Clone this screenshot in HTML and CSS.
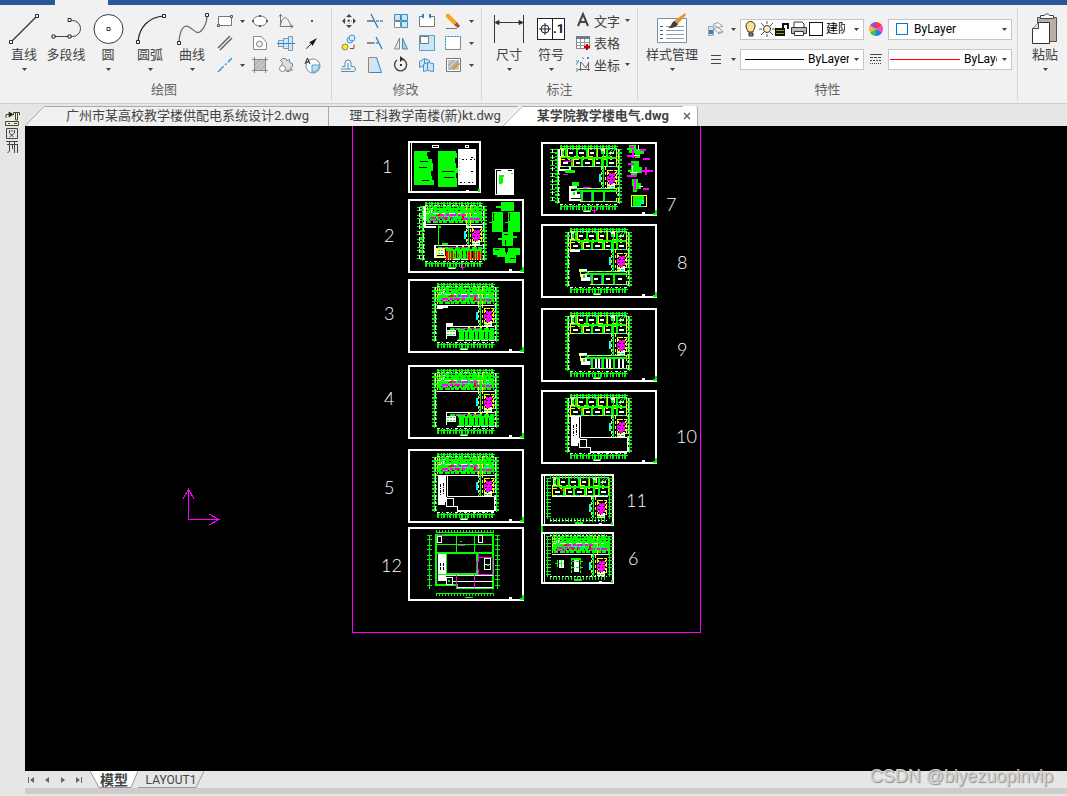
FILE: index.html
```
<!DOCTYPE html>
<html lang="zh-CN">
<head>
  <meta charset="UTF-8" />
  <meta name="viewport" content="width=device-width, initial-scale=1" />
  <title>某学院教学楼电气.dwg</title>
  <link rel="stylesheet" href="styles.css">
</head>

<body>
  <svg class="defs" width="0" height="0" aria-hidden="true">
    <defs>
      <symbol id="caret" viewBox="0 0 5 3"><path d="M0 0h5L2.500 3z" fill="#444"/></symbol>

      <!-- dimension ticks round a floor plan -->
      <g id="dims" fill="none">
        <path d="M29 6H87M29 66H87" stroke="#0f0" stroke-width="5" stroke-dasharray="2 2 1 1"/>
        <path d="M29 5.500H87M29 65.500H87" stroke="#0f0"/>
        <path d="M29 7.500H87M29 63.500H87" stroke="#fff" stroke-dasharray="3 2 1 3"/>
        <path d="M26.500 8V63M88.500 8V63" stroke="#0f0" stroke-width="5" stroke-dasharray="1 2 2 2"/>
        <path d="M26.500 8V63M88.500 8V63" stroke="#0f0"/>
        <path d="M27.500 8V63M87.500 8V63" stroke="#fff" stroke-dasharray="3 2 5 1"/>
        <path d="M52 69.500H60" stroke="#0f0" stroke-width="2"/>
        <path d="M53 70.500H59" stroke="#fff"/>
      </g>
      <g id="sheet">
        <rect x="1" y="1" width="114" height="72" fill="#000" stroke="#fff" stroke-width="2"/>
        <path d="M101 72v-2h3v2z" fill="#fff"/><path d="M112 73v-2h2v-3h2v5z" fill="#0f0"/>
      </g>
      <g id="small-sheet">
        <path d="M1 1H72V51H1z" fill="#000" stroke="#fff" stroke-width="2"/>
        <path d="M2 2V50" stroke="#000"/><path d="M3.500 1V51" stroke="#fff"/>
        <path d="M58 51v-2h3v2z" fill="#fff"/><path d="M70 51v-3h2v3z" fill="#0f0"/>
      </g>
      <!-- upper wing full of wiring -->
      <g id="wiring" fill="none">
        <path d="M29 8H86V25H29z" fill="#0f0"/>
        <path d="M30 9.500H86" stroke="#000" stroke-dasharray="3 2 1 5 2 1"/>
        <path d="M30 12.500H86M33 21.500H84" stroke="#000" stroke-dasharray="1 6 1 3 2 8"/>
        <path d="M30 24H85" stroke="#000" stroke-width="2" stroke-dasharray="1 4 2 5 1 3"/>
        <path d="M30 15.500H86" stroke="#fff" stroke-dasharray="3 4 6 3"/>
        <path d="M29.500 9V25M31.500 9V15" stroke="#ff0" stroke-dasharray="3 1 1 2"/>
        <path d="M33 14H36V10" stroke="#fff" stroke-width="2" stroke-dasharray="1 1"/>
        <path d="M42 17H70M34 20H58M66 21H84" stroke="#f0f" stroke-width="2" stroke-dasharray="6 2 3 1"/>
        <path d="M34 22.500H43" stroke="#f0f"/>
        <path d="M50 18.500H64M69 18.500H84" stroke="#0ff" stroke-dasharray="3 3 2 1"/>
        <path d="M40 17h2v-1h2v2h-4zM49 20h2v2h-2zM66 18h2v3h-2zM74 16h2v2h-2z" fill="#f00"/>
        <path d="M70.500 8V26M74.500 8V26" stroke="#ff0" stroke-dasharray="4 3"/>
        <path d="M29 26H86" stroke="#fff"/>
      </g>
      <!-- upper wing with two rows of rooms -->
      <g id="rooms" fill="none">
        <path d="M29 7.500H86M29 25.500H86" stroke="#0ff"/>
        <path d="M29 7.500H86M29 15.500H86M29 18.500H86M29 25.500H86" stroke="#ff0" stroke-dasharray="5 3 2 4"/>
        <path d="M29 16.500H86M36 17.500H86" stroke="#0f0"/>
        <path d="M34.500 8V16M45.500 8V16M55.500 8V16M65.500 8V16M75.500 8V16M40.500 18V25M50.500 18V25M61.500 18V25M70.500 18V25M75.500 18V25" stroke="#0f0" stroke-width="2"/>
        <path d="M36.500 8V16M57.500 8V16M66.500 8V16M85.500 8V25M42.500 18V25M63.500 18V25M29.500 16V25" stroke="#ff0"/>
        <path d="M30 8h3v7h-3zM70 8h4v5h-4z" fill="#fff"/><path d="M31 10h2v4h-2zM70 10h3v3h-3z" fill="#0f0"/>
        <path d="M38 11.500H42M48 11.500H53M59 11.500H63M78 11.500H83M32 21.500H37M45 21.500H49M54 21.500H59M65 21.500H69M78 21.500H83" stroke="#fff" stroke-width="2"/>
        <path d="M76 17L85 8M76 14L82 8" stroke="#0f0"/>
        <path d="M38 19h2v2h-2z" fill="#f00"/>
      </g>
      <!-- stairwell and lift on the right side -->
      <g id="stair" fill="none">
        <path d="M70.500 26V47M74.500 26V47" stroke="#ff0" stroke-dasharray="3 2"/>
        <path d="M71.500 26V33M71.500 41V47" stroke="#0ff" stroke-dasharray="2 1"/>
        <path d="M69 33V41" stroke="#0ff" stroke-width="2"/>
        <path d="M72.500 10V47" stroke="#0f0"/>
        <path d="M76.500 29.500H85.500V43.500H76.500z" stroke="#ff0" stroke-dasharray="5 1"/>
        <path d="M77.500 31V42M84 31V42" stroke="#ff0" stroke-dasharray="2 2"/>
        <path d="M78 32h6v9h-2v2h-4v-3h-2v-5h2z" fill="#f0f"/>
        <path d="M78 35.500H84M77 38.500H82M80.500 31V34" stroke="#000" stroke-dasharray="2 2"/>
        <path d="M76 44h6v-2h2v5h-8z" fill="#fff"/><path d="M76 45.500H84" stroke="#0f0" stroke-dasharray="3 1"/>
      </g>
      <g id="south-wiring" fill="none">
        <path d="M50 51H86V61H50z" fill="#0f0"/>
        <path d="M38.500 60V47.500H86" stroke="#fff"/>
        <path d="M42 49.500H86" stroke="#0f0" stroke-width="2" stroke-dasharray="5 1 9 2"/>
        <path d="M46 49.500H72" stroke="#f0f" stroke-dasharray="3 3 4 1"/>
        <path d="M60 48.500H80" stroke="#ff0" stroke-dasharray="2 4"/>
        <path d="M39 51h9v6h-9z" fill="#fff"/>
        <path d="M39 52.500H48M39 55.500H48" stroke="#0f0" stroke-dasharray="2 1"/>
        <path d="M50 56.500H84" stroke="#000" stroke-width="7" stroke-dasharray="1 5 1 3"/>
        <path d="M49 61.500H86" stroke="#fff" stroke-dasharray="7 1"/>
      </g>
      <g id="south-rooms" fill="none">
        <path d="M38 47.500H86M49 60.500H86" stroke="#0ff"/>
        <path d="M38 47.500H86M49 60.500H86M85.500 48V60M39.500 48V57" stroke="#ff0" stroke-dasharray="5 4"/>
        <path d="M44 49.500H86M50.500 49V60M61.500 49V60M72.500 49V60" stroke="#0f0" stroke-width="2"/>
        <path d="M49.500 50V57M60.500 51V60" stroke="#66f"/>
        <path d="M38 45h8v2h-8zM40 50h6v3h3v4h-9z" fill="#fff"/><path d="M42 51h2v3h-2zM46 48h2v3h-2z" fill="#0f0"/>
      </g>
      <g id="void" fill="none" stroke="#fff">
        <path d="M30 27h8v21h1v5h-2v3h-7z" fill="#fff" stroke="none"/>
        <path d="M32.500 35V46M35.500 34V46" stroke="#000" stroke-dasharray="3 1 1 1"/>
        <path d="M29 26.500H39.500V47.500H86M38.500 49V57.500H45.500V49.500H39M45.500 57.500H49.500V61.500H86V47.500"/>
        <path d="M49 62H86"/>
      </g>
    </defs>
  </svg>

  <header class="topbar"><span class="topbar-tab"></span></header>

  <div class="ribbon">
    <section class="group draw">
      <div class="tools">
        <button class="big">
          <svg width="34" height="34" viewBox="0 0 34 34" fill="none"><path d="M4 30L30 4" stroke="#45474d" stroke-width="1.600"/><path d="M2.500 28.500h3v3h-3zM28.500 2.500h3v3h-3z" fill="#fff" stroke="#222b3a"/></svg>
          <span>直线</span><svg class="caret"><use href="#caret"/></svg>
        </button>
        <button class="big">
          <svg width="34" height="34" viewBox="0 0 34 34" fill="none" stroke="#3c4452"><path d="M4.500 24.500h16M20.500 8.500h3a8 8 0 0 1 0 16h-3"/><path d="M3 23h3v3h-3zM19 23h3v3h-3zM19 6.500h3v3h-3z" fill="#fff" stroke="#222b3a"/></svg>
          <span>多段线</span>
        </button>
        <button class="big">
          <svg width="34" height="34" viewBox="0 0 34 34" fill="#fff" stroke="#333b48"><circle cx="17.500" cy="17" r="14.500"/><path d="M16 15.500h3v3h-3z"/></svg>
          <span>圆</span><svg class="caret"><use href="#caret"/></svg>
        </button>
        <button class="big">
          <svg width="34" height="34" viewBox="0 0 34 34" fill="none" stroke="#222"><path d="M5 30C6 15 16 5 31 4" stroke-width="1.200"/><path d="M3.500 28.500h3v3h-3zM29.500 2.500h3v3h-3z" fill="#fff"/></svg>
          <span>圆弧</span><svg class="caret"><use href="#caret"/></svg>
        </button>
        <button class="big">
          <svg width="34" height="34" viewBox="0 0 34 34" fill="none" stroke="#666"><path d="M4 30C5 17 9 12 14 15C19 18 22 23 26 19C30 15 32 10 32 4" stroke-width="1.200"/><path d="M2.500 29.500h3v3h-3zM30.500 1.500h3v3h-3z" fill="#fff" stroke="#222b3a"/></svg>
          <span>曲线</span><svg class="caret"><use href="#caret"/></svg>
        </button>
        <div class="small-grid draw-grid">
          <button aria-label="矩形"><svg width="18" height="18" fill="none"><path d="M2.500 4.500h13v9h-13z" fill="#fff" stroke="#777"/><path d="M1.500 12.500h2v2h-2zM14.500 3.500h2v2h-2z" fill="#eee" stroke="#555"/></svg></button>
          <button aria-label="矩形选项"><svg class="caret"><use href="#caret"/></svg></button>
          <button aria-label="椭圆"><svg width="18" height="18"><ellipse cx="9" cy="9" rx="7" ry="5" fill="#fff" stroke="#777"/><path d="M1 8h2v2h-2zM15 8h2v2h-2zM8 3h2v2h-2zM8 13h2v2h-2z" fill="#555"/></svg></button>
          <button aria-label="函数曲线"><svg width="18" height="18" fill="none" stroke="#777"><path d="M3.500 2v12.500H16M3 14C6 3 10 3 14 14M2 4.500l1.500-2 2 2M14 12.500l2 2-2 2"/></svg></button>
          <button aria-label="点"><svg width="18" height="18"><path d="M8 8h2v2H8z" fill="#555"/></svg></button>

          <button aria-label="多线"><svg width="18" height="18" stroke="#66636c" stroke-width="1.500"><path d="M2 14L14 2M4 16L16 4"/></svg></button>
          <span></span>
          <button aria-label="面域"><svg width="18" height="18" fill="#fff" stroke="#888"><path d="M2.500 15.500v-13h8l5 6v7z"/><circle cx="8.500" cy="10" r="3" fill="#eee"/></svg></button>
          <button aria-label="轴"><svg width="18" height="18" fill="#d3e8f6" stroke="#7b99b1"><path d="M1.500 6.500h5v6h-5zM6.500 4.500h5v10h-5zM11.500 2.500h4v14h-4z"/><path d="M0 9.500h18" stroke="#2e86cf"/></svg></button>
          <button aria-label="箭头"><svg width="18" height="18"><path d="M14 4L6 8.500l2 1-5 5 .5.500 5-5 1 2z" fill="#111"/></svg></button>

          <button aria-label="构造线"><svg width="18" height="18" stroke="#26a3dd" stroke-width="1.500"><path d="M2 16L16 2" stroke-dasharray="8 2 2 2"/></svg></button>
          <button aria-label="构造线选项"><svg class="caret"><use href="#caret"/></svg></button>
          <button aria-label="填充"><svg width="18" height="18" stroke="#888"><path d="M3.500 3.500h11v11h-11z" fill="#c3c6c8"/><path d="M1 3.500h16M1 14.500h16M3.500 1v16M14.500 1v16"/><path d="M4 9l5-5M4 14L14 4M9 14l5-5" stroke="#aaa"/></svg></button>
          <button aria-label="图块"><svg width="18" height="18" fill="#d9e1e7" stroke="#7b8790"><path d="M5.500 2.500h3l1 2 3-1v3l3 1v3l-2 1 1 2-2 2h-3l-3-5-2-1 1-3-2-2z"/><circle cx="5.500" cy="12.500" r="3" fill="#fff"/><path d="M10 14h6"/></svg></button>
          <button aria-label="局部放大"><svg width="18" height="18"><circle cx="10" cy="10" r="7" fill="#fff" stroke="#6b89a0"/><path d="M9 9h7c0 4-3 7-7 7z" fill="#b9e1f7" stroke="#5aa0cc"/><path d="M2 8L4.500 2 7 8M3 6h3" fill="none" stroke="#222"/></svg></button>
        </div>
      </div>
      <h2>绘图</h2>
    </section>

    <section class="group modify">
      <div class="tools">
        <div class="small-grid modify-grid">
          <button aria-label="移动"><svg width="18" height="18" fill="#444"><path d="M9 2l3 3H6zM9 16l3-3H6zM2 9l3-3v6zM16 9l-3-3v6z"/><path d="M8 8h2v2H8z"/><path d="M9 5v8M5 9h8" stroke="#888" stroke-dasharray="1 1"/></svg></button>
          <button aria-label="修剪"><svg width="18" height="18" stroke-width="1.300"><path d="M1 9h7" stroke="#555"/><path d="M10 9h7" stroke="#3b93cf" stroke-dasharray="3 1"/><path d="M5 2l7 14" stroke="#2479c4"/></svg></button>
          <button aria-label="阵列"><svg width="18" height="18" fill="#c7e8fa" stroke="#3c8fc0"><path d="M2.500 2.500h6v6h-6zM9.500 2.500h6v6h-6zM9.500 9.500h6v6h-6z"/><path d="M2.500 9.500h6v6h-6z" fill="#fff" stroke="#888"/></svg></button>
          <button aria-label="打断"><svg width="18" height="18"><path d="M5.500 4.500h-4v10h15v-10h-4" fill="#fff" stroke="#777"/><path d="M5 2v4M12 2v4" stroke="#238bd1" stroke-width="2"/></svg></button>
          <button aria-label="删除"><svg width="18" height="18"><path d="M2 2h3l8 8-3 3L2 5z" fill="#f3a51e"/><path d="M10 13l3-3 3 4-2 2z" fill="#9d563b"/><path d="M2 16.500h11" stroke="#777"/></svg></button>
          <button aria-label="删除选项"><svg class="caret"><use href="#caret"/></svg></button>

          <button aria-label="复制"><svg width="18" height="18"><circle cx="5" cy="13" r="3" fill="#ffea00" stroke="#888"/><circle cx="10" cy="6" r="3" fill="#d4edfb" stroke="#4394cc"/><circle cx="12" cy="4" r="3" fill="#d4edfb" stroke="#4394cc"/><path d="M10 14.500h4v-4" fill="none" stroke="#a33"/></svg></button>
          <button aria-label="延伸"><svg width="18" height="18" stroke-width="1.300"><path d="M1 9h6" stroke="#555"/><path d="M7 9h5" stroke="#3b93cf" stroke-dasharray="2 1"/><path d="M10 3l6 12" stroke="#2479c4"/></svg></button>
          <button aria-label="镜像"><svg width="18" height="18" stroke="#888"><path d="M7.500 4v11h-5z" fill="#e9e9e9"/><path d="M10.500 4v11h5z" fill="#9fd2ee" stroke="#4b8bb0"/></svg></button>
          <button aria-label="缩放"><svg width="18" height="18"><path d="M1.500 1.500h15v15h-15z" fill="#c7e8fa" stroke="#57a5cf"/><path d="M2.500 2.500h8v7h-8z" fill="#fff" stroke="#777"/></svg></button>
          <button aria-label="拉伸"><svg width="18" height="18" fill="#fff" stroke="#888"><path d="M1.500 2.500h15v13h-15z"/><path d="M1.500 15V2.500h15" stroke="#28a0dc" stroke-dasharray="2 1"/></svg></button>
          <button aria-label="拉伸选项"><svg class="caret"><use href="#caret"/></svg></button>

          <button aria-label="偏移"><svg width="18" height="18" fill="none" stroke="#4f8fb7"><path d="M1 15.500h12a2 2 0 0 0 0-5h-2V7a3 3 0 0 0-6 0v3.500H2M1 13h10M8 13V7"/></svg></button>
          <button aria-label="拔模"><svg width="18" height="18" fill="#dce3e6" stroke="#888"><path d="M2.500 1.500h8v15h-8z"/><path d="M10.500 1.500l5 15H5" fill="#c7e8fa" stroke="#338ac4"/></svg></button>
          <button aria-label="旋转"><svg width="18" height="18"><path d="M10 3a6 6 0 1 1-5 1" fill="none" stroke="#444" stroke-width="1.400"/><path d="M8 0l4 3-4 3zM8 8h2v2H8z" fill="#333"/></svg></button>
          <button aria-label="分解"><svg width="18" height="18" fill="#c7e8fa" stroke="#4f92b9"><path d="M1.500 5.500l5-3 5 2v7l-5-2-5 2z"/><path d="M5.500 8.500l4-2 6 1v8l-6-1-4 1zM9.500 7v7M6.500 3v5"/></svg></button>
          <button aria-label="编辑填充"><svg width="18" height="18"><path d="M2.500 2.500h14v13h-14z" fill="#fff" stroke="#777"/><path d="M4 4h11v10H4z" fill="#c5c9cc"/><path d="M4 10l6-6M5 14L15 4" stroke="#999"/><path d="M9 11l5-5 2 2-5 5-3 1z" fill="#d69a45"/></svg></button>
          <button aria-label="编辑填充选项"><svg class="caret"><use href="#caret"/></svg></button>
        </div>
      </div>
      <h2>修改</h2>
    </section>

    <section class="group annotate">
      <div class="tools">
        <button class="big">
          <svg width="34" height="34" viewBox="0 0 34 34" stroke="#333a44"><path d="M2.500 3v28M31.500 3v28M3 10.500h28"/><path d="M3 10.500l4-2v4zM31 10.500l-4-2v4z" fill="#222"/></svg>
          <span>尺寸</span><svg class="caret"><use href="#caret"/></svg>
        </button>
        <button class="big">
          <span class="symbol-icon"><svg width="14" height="20" viewBox="0 0 14 20" fill="none" stroke="#222"><circle cx="7" cy="10" r="4"/><path d="M1 10h12M7 4v12"/></svg><b>.1</b></span>
          <span>符号</span><svg class="caret"><use href="#caret"/></svg>
        </button>
        <div class="word-list">
          <button><svg width="18" height="18" fill="none" stroke="#444" stroke-width="2"><path d="M4 15L9 3l5 12M6 11h7"/></svg>文字<svg class="caret"><use href="#caret"/></svg></button>
          <button><svg width="18" height="18"><path d="M2.500 3.500h13v12h-13z" fill="#fff" stroke="#888"/><path d="M2 3h14v3H2z" fill="#6f7d8b"/><path d="M3 9.500h12M3 12.500h12M6.500 6v9M10.500 6v9" stroke="#999"/><path d="M13 11v6M10 14h6" stroke="#c00" stroke-width="2"/></svg>表格</button>
          <button><svg width="18" height="18" fill="none" stroke="#666"><path d="M6.500 7v9M4 14.500h12M14.500 8v8M7 7l5 6 3-6"/><path d="M2 5l2 3M5 5l-3 5M8 2l2 2M13 2l2 2M15 2l-2 2M3 13v4" stroke="#3a94cb"/></svg>坐标<svg class="caret"><use href="#caret"/></svg></button>
        </div>
      </div>
      <h2>标注</h2>
    </section>

    <section class="group properties">
      <div class="tools">
        <button class="big wide">
          <svg width="34" height="34" viewBox="0 0 34 34"><path d="M2.500 6.500h29v24h-29z" fill="#fff" stroke="#7592ad"/><path d="M5 14.500h4M5 18.500h4M5 22.500h4M5 26.500h4" stroke="#346893" stroke-dasharray="3 1"/><path d="M11 14.500h18M11 18.500h18M11 22.500h18M11 26.500h18" stroke="#8ca0b2"/><path d="M19 9L30 1l1 2-9 10z" fill="#e09632"/><path d="M19 9l4 3c-2 4-6 4-10 4 4-2 3-5 6-7z" fill="#513a30"/></svg>
          <span>样式管理</span><svg class="caret"><use href="#caret"/></svg>
        </button>
        <div class="prop-grid">
          <button aria-label="图层"><svg width="18" height="18" fill="#f7f7f7" stroke="#9aa0a6"><path d="M6 4.500l5-2 5 4-5 1zM6 8.500l5-1 5 4-5 1zM11 14l5-2"/><path d="M1.500 6.500h5v9h-5z" fill="#cfe4f2"/><path d="M2 10h4v4H2z" fill="#437fa9" stroke="none"/></svg></button>
          <button aria-label="图层选项"><svg class="caret"><use href="#caret"/></svg></button>
          <label class="combo layer">
            <svg width="16" height="16"><path d="M5 11c0-2-2-3-2-6a4 4 0 0 1 9 0c0 3-2 4-2 6z" fill="#fde28d" stroke="#333"/><path d="M6 12h4v3H6z" fill="#888" stroke="#333"/></svg>
            <svg width="16" height="16"><circle cx="8" cy="8" r="3.500" fill="#fff3cf" stroke="#333"/><path d="M8 0v3M8 13v3M0 8h3M13 8h3M2 2l3 3M11 11l3 3M14 2l-3 3M5 11l-3 3" stroke="#555"/></svg>
            <svg width="15" height="16"><path d="M0 7h10v8H0z" fill="#111"/><path d="M1 9.500h8M1 12.500h8" stroke="#9c9a17"/><path d="M8 7V3h5v5" fill="none" stroke="#111" stroke-width="2"/></svg>
            <svg width="18" height="16"><path d="M4 6V1h8l2 2v3" fill="#fff" stroke="#333"/><path d="M1.500 6.500h15v6h-15z" fill="#bbb" stroke="#333"/><path d="M4.500 10.500h9v4h-9z" fill="#fff" stroke="#333"/></svg>
            <i class="swatch"></i>
            <select aria-label="图层"><option>建防</option></select>
            <svg class="caret"><use href="#caret"/></svg>
          </label>
          <svg class="mid" width="14" height="14" viewBox="0 0 14 14"><path d="M7 7V0A7 7 0 0 1 13 3.500z" fill="#f53c2d"/><path d="M7 7l6-3.500a7 7 0 0 1 0 7z" fill="#fa45bc"/><path d="M7 7l6 3.500A7 7 0 0 1 7 14z" fill="#2678f3"/><path d="M7 7v7a7 7 0 0 1-6-3.500z" fill="#35c45c"/><path d="M7 7l-6 3.500a7 7 0 0 1 0-7z" fill="#f0b92c"/><path d="M7 7L1 3.500A7 7 0 0 1 7 0z" fill="#9a45e4"/></svg>
          <label class="combo color">
            <i class="swatch"></i>
            <select aria-label="颜色"><option>ByLayer</option></select>
            <svg class="caret"><use href="#caret"/></svg>
          </label>

          <button aria-label="线宽"><svg width="18" height="18" stroke="#444"><path d="M4 5.500h10M4 9.500h10M4 13.500h10"/></svg></button>
          <button aria-label="线宽选项"><svg class="caret"><use href="#caret"/></svg></button>
          <label class="combo weight">
            <i class="rule"></i>
            <select aria-label="线宽"><option>ByLayer</option></select>
            <svg class="caret"><use href="#caret"/></svg>
          </label>
          <svg class="mid" width="14" height="14" viewBox="0 0 14 14" stroke="#444"><path d="M1 2.500h12"/><path d="M1 5.500h12" stroke-dasharray="3 1"/><path d="M1 8.500h12" stroke-dasharray="2 1"/><path d="M1 11.500h12" stroke-dasharray="1 1"/></svg>
          <label class="combo linetype">
            <i class="rule red"></i>
            <select aria-label="线型"><option>ByLayer</option></select>
            <svg class="caret"><use href="#caret"/></svg>
          </label>
        </div>
      </div>
      <h2>特性</h2>
    </section>

    <section class="group clipboard">
      <div class="tools">
        <button class="big">
          <svg width="34" height="34" viewBox="0 0 34 34"><path d="M9.500 5.500h19v24h-19z" fill="#b9afa4" stroke="#555"/><path d="M12.500 6.500v-3h4c0-2 5-2 5 0h4v3z" fill="#fff" stroke="#444"/><path d="M10.500 10.500h11v21h-17v-15z" fill="#fff" stroke="#333"/><path d="M10.500 10.500v6h-6" fill="#ddd" stroke="#444"/></svg>
          <span>粘贴</span><svg class="caret"><use href="#caret"/></svg>
        </button>
      </div>
      <h2>剪贴板</h2>
    </section>
  </div>

  <div class="workspace">
    <aside class="palette">
      <button aria-label="工具面板">
        <svg width="16" height="44" viewBox="0 0 16 44" fill="none" stroke="#444"><path d="M0 0h16v15H0z" fill="#eeedd8" stroke="none"/><path d="M1 7V3.500h4M8.500 4v-2.500h6V4M10.500 2v7h2V2"/><path d="M4 1l4 2.500L4 6z" fill="#111"/><path d="M.5 10.500h13v4H.5zM3 12.500h2M9 12.500h3"/><path d="M1.500 17.500h11v10h-11zM4.500 19v3l4 4M9.500 19v3l-5 4M7 19v2M1 30.500h12M2 33.500h11M4.500 30v10l-2 2M7.500 33v5M9.500 30v12M12.500 33v9"/></svg>
      </button>
    </aside>
    <main>
      <nav class="file-tabs">
        <button class="file-tab first"><svg class="slant" width="20" height="20"><path d="M0 20L19 1h1v19z" fill="#f0f0f0"/><path d="M0 20L19 .5h1" fill="none" stroke="#aaa"/></svg><span>广州市某高校教学楼供配电系统设计2.dwg</span></button>
        <button class="file-tab second"><span>理工科教学南楼(新)kt.dwg</span></button>
        <button class="file-tab current"><svg class="slant" width="20" height="20"><path d="M0 0h18L0 18z" fill="#f0f0f0"/><path d="M0 20L19 1h1v19z" fill="#fff"/><path d="M0 .5h15M0 20L19 .5h1" fill="none" stroke="#aaa"/></svg><span>某学院教学楼电气.dwg</span><svg class="close" width="8" height="8" stroke="#666" stroke-width="1.500"><path d="M1 1l6 6M7 1L1 7"/></svg></button>
      </nav>

      <div class="canvas">
        <svg class="drawing" shape-rendering="crispEdges">
          <path d="M327.500 0V506.500H675.500V0" fill="none" stroke="#f0f"/>
          <!-- ucs icon -->
          <path d="M163.500 363V393.500H194M158 373l5.500-10 5.500 10M184 388l10 5.500-10 5.500" fill="none" stroke="#f0f"/>

          <!-- 1: notes -->
          <g transform="translate(383 15)" fill="none">
            <use href="#small-sheet"/>
            <path d="M6 10h16v1h-3v4h1v3h4v4h1v8h-2v5h1v4h2v5H6zM30 10h18v2h1v5h-2v5h1v5h2v5h-2v5h1v9H30z" fill="#0f0"/>
            <path d="M12 20.500h8M11 26.500h8M14 39.500h7M34 30.500h12M36 36.500h10" stroke="#000"/>
            <path d="M24.500 4.500h6v2h-6zM57.500 4.500h3v2h-3z" stroke="#fff"/>
            <path d="M50 8h18v36H50z" fill="#fff"/>
            <path d="M63 16.500h4M54 18.500h13M63 30.500h4M52 41.500h14" stroke="#000" stroke-dasharray="2 2 1 3"/>
            <path d="M51.500 17v20" stroke="#0f0" stroke-dasharray="1 3"/>
          </g>
          <g transform="translate(470 43)"><path d="M0 0h19v26H0z" fill="#fff"/><path d="M1.500 1v24M2 1.500h4M13 1.500h4" stroke="#000"/><path d="M4 6h5v2h-1v6H7v1H4zM16 4h2v1h-2z" fill="#0f0"/></g>

          <!-- 2 -->
          <g transform="translate(383 73)" fill="none">
            <use href="#sheet"/>
            <g transform="translate(-12 -1)"><use href="#dims"/><use href="#wiring"/><use href="#stair"/><use href="#south-wiring"/>
              <path d="M50 57H58M72 57H86" stroke="#f00" stroke-width="9" stroke-dasharray="2 1 1 1"/>
              <path d="M58 57H72" stroke="#f00" stroke-width="3" stroke-dasharray="1 3"/>
              <path d="M38.500 47v12H50M28.500 8v21h11M70 28.500H86" stroke="#fff" stroke-width="2"/><path d="M40 50h8v8h-8z" stroke="#ff0"/>
              <path d="M42.500 26v22" stroke="#0f0"/><path d="M42 28h3v2h-3zM46 45h6v2h-6z" fill="#0f0"/>
            </g>
            <path d="M11.500 8V62" stroke="#0f0" stroke-width="5" stroke-dasharray="1 2 1 4"/><path d="M11.500 8V62" stroke="#fff" stroke-dasharray="4 2"/>
            <path d="M93 3h13v9H93v-3h-5V7h5zM84 13h11v20H84v-9h-3v-1h3zM100 13h12v20h-12v-9h-3v-1h3zM94 33h11v4h4v2h-4v8H94v-6h-4v-2h4zM85 49h12v4h3v-4h12v7h-4v8H97v-6h-8v-2h-4z" fill="#0f0"/>
            <path d="M85.500 14v8M101.500 14v8M96 35.500h4M97 41v5M87 50.500h4M102 59h5M98 51v4" stroke="#000"/>
            <path d="M52 68.500h5M54.500 66v5" stroke="#f0f"/>
          </g>

          <!-- 3 -->
          <g transform="translate(383 153)"><use href="#sheet"/><use href="#dims"/><use href="#wiring"/><use href="#stair"/><use href="#south-wiring"/><path d="M29 27h11v2h-5v1h-6zM38 44h7v4h-7z" fill="#fff"/></g>
          <!-- 4 -->
          <g transform="translate(383 239)"><use href="#sheet"/><use href="#dims"/><use href="#wiring"/><use href="#stair"/><use href="#south-wiring"/></g>
          <!-- 5 -->
          <g transform="translate(383 323)"><use href="#sheet"/><use href="#dims"/><use href="#wiring"/><use href="#stair"/><use href="#void"/></g>

          <!-- 12: roof -->
          <g transform="translate(383 401)" fill="none">
            <use href="#sheet"/>
            <path d="M28 4H86M28 67H86" stroke="#0f0" stroke-width="3" stroke-dasharray="1 2"/><path d="M28 5.500H86M28 66.500H86" stroke="#0f0"/>
            <path d="M21.500 8V62M89.500 8V62" stroke="#0f0" stroke-width="5" stroke-dasharray="1 3 1 5"/><path d="M21.500 8V62M89.500 8V62" stroke="#0f0"/>
            <path d="M28 8H85V61H49V58H28zM28 26H85M38 26V47H69V26" stroke="#0f0" stroke-width="2"/>
            <path d="M28 17.500H85M48.500 8V26M66.500 8V26" stroke="#0f0"/>
            <path d="M30 27h8v27h-8z" fill="#fff"/><path d="M32.500 36V44M35.500 36V44" stroke="#000" stroke-dasharray="3 1"/>
            <path d="M29.500 9.500h4v6h-4zM70.500 8.500h4v7h-4zM38.500 50.500h6v7h-6zM44 54.500H85M49 60.500H85M76.500 31.500h6v11h-6zM76 37.500h7M38 48.500H85" stroke="#fff"/>
            <path d="M70.500 26V34H68.500V42H70.500V47.500H84V30.500H71M48.500 48V61M66.500 48V61M30 7.500h6M50 18.500h7" stroke="#f0f"/>
            <path d="M40 53h2v2h-2zM52 14h2v1h-2zM79 37h2v2h-2zM30 47h8v1h-8z" fill="#0f0"/><path d="M57 70.500h8" stroke="#0f0"/>
          </g>

          <!-- 7 -->
          <g transform="translate(516 16)" fill="none">
            <use href="#sheet"/>
            <g transform="translate(-10 -1)"><use href="#dims"/><use href="#rooms"/><use href="#stair"/><use href="#south-rooms"/>
              <path d="M27.500 8V29H39V26M38.500 45V59H50" stroke="#fff" stroke-width="2"/><path d="M34 29h10v3H34zM41 41h7v4h-7z" fill="#0f0"/><path d="M33 20.500h9M32 33.500h5M52 46.500h8" stroke="#f0f"/>
            </g>
            <path d="M11.500 7V61" stroke="#0f0" stroke-width="5" stroke-dasharray="1 2 1 4"/><path d="M11.500 7V61" stroke="#fff" stroke-dasharray="4 2"/>
            <path d="M88 3h7v4h8v5h-4v4h-5v-5h-6V8h-2V6h2zM90 19h8v6h3v6h-5v4h-6v-5h-3v-2h3zM91 37h6v4h3v6h-4v3h-4z" fill="#0f0"/>
            <path d="M89 5h4M86 14h10M92 7v9M102 16.500h7M87 21.500h6M105 25v8M100 28.500h12M86 34h10M94 37v11M102 46.500h6M99 8h6" stroke="#f0f" stroke-width="2"/>
            <path d="M93 13.500h6M97 3v5M89 30.500h8M91 24v6M98 44h4" stroke="#fff"/>
            <path d="M90.500 53.500h15v11h-15z" stroke="#ff0"/><path d="M92 54h11v8h-3v2h-8z" fill="#0f0"/><path d="M97 58h5v3h-3M91 64.500h12" stroke="#0ff"/>
            <path d="M51 68.500h5M53.500 66v5" stroke="#f0f"/>
          </g>
          <!-- 8 -->
          <g transform="translate(516 98)"><use href="#sheet"/><use href="#dims"/><use href="#rooms"/><use href="#stair"/><use href="#south-rooms"/><path d="M53 55h4M65 55h4M77 55h4" stroke="#fff" stroke-width="2"/><path d="M29 26h10v2H29z" fill="#fff"/></g>
          <!-- 9 -->
          <g transform="translate(516 182)"><use href="#sheet"/><use href="#dims"/><use href="#rooms"/><use href="#stair"/><use href="#south-rooms"/><path d="M54.500 51v9M57.500 51v9M65.500 51v9M68.500 51v9M77.500 51v9M81.500 51v9" stroke="#fff" stroke-width="2"/></g>
          <!-- 10 -->
          <g transform="translate(516 264)"><use href="#sheet"/><use href="#dims"/><use href="#rooms"/><use href="#stair"/><use href="#void"/></g>

          <!-- 11 -->
          <g transform="translate(516 348)" fill="none">
            <use href="#small-sheet"/>
            <use href="#rooms" x="-18" y="-4"/><use href="#stair" x="-20" y="-3"/>
            <path d="M9 45.500H66M9 2.500H66" stroke="#0f0" stroke-width="4" stroke-dasharray="1 2"/><path d="M9 46.500H66" stroke="#fff" stroke-dasharray="2 2"/>
            <path d="M7 4V45M69 4V45" stroke="#0f0" stroke-width="5" stroke-dasharray="1 2 1 3"/><path d="M6.500 4V45M68.500 4V45" stroke="#0f0"/>
            <path d="M11 22.500H67" stroke="#fff"/><path d="M34 48.500h8M.5 52v6" stroke="#0f0" stroke-width="2"/>
          </g>
          <!-- 6 -->
          <g transform="translate(516 406)" fill="none">
            <use href="#small-sheet"/>
            <use href="#wiring" x="-18" y="-4"/><use href="#stair" x="-20" y="-3"/>
            <path d="M9 45.500H66M9 2.500H66" stroke="#0f0" stroke-width="4" stroke-dasharray="1 2"/><path d="M9 44.500H66M9 3.500H66" stroke="#fff" stroke-dasharray="2 2"/>
            <path d="M7 4V45M69 4V45" stroke="#0f0" stroke-width="5" stroke-dasharray="1 2 1 3"/><path d="M6.500 4V45M68.500 4V45" stroke="#0f0"/>
            <path d="M18 28h5v8h-5zM33 26h5v14h-5z" fill="#fff"/><path d="M14 31.500h9M16.500 28v7M20 28v7M30.500 26v15M39.500 26v15M31 29.500h12M31 35.500h12" stroke="#0f0" stroke-dasharray="3 1"/>
            <path d="M30 26.500h10M33 48h8" stroke="#0f0" stroke-width="2"/>
          </g>

          <g class="sheet-no">
            <text x="357" y="47">1</text><text x="359" y="116">2</text><text x="359" y="194">3</text>
            <text x="359" y="279">4</text><text x="359" y="368">5</text><text x="356" y="446">12</text>
            <text x="641" y="85">7</text><text x="652" y="143">8</text><text x="652" y="230">9</text>
            <text x="651" y="317">10</text><text x="601" y="381">11</text><text x="603" y="439">6</text>
          </g>
        </svg>
      </div>

      <footer class="layout-bar">
        <div class="layout-tabs">
          <div class="steps">
            <button aria-label="首页"><svg width="8" height="8" fill="#666"><path d="M1 1h1v6H1zM7 1v6L3 4z"/></svg></button>
            <button aria-label="上一页"><svg width="8" height="8" fill="#666"><path d="M6 1v6L2 4z"/></svg></button>
            <button aria-label="下一页"><svg width="8" height="8" fill="#666"><path d="M2 1v6l4-3z"/></svg></button>
            <button aria-label="末页"><svg width="8" height="8" fill="#666"><path d="M6 1h1v6H6zM1 1v6l4-3z"/></svg></button>
          </div>
          <button class="layout-tab active"><svg width="48" height="17"><path d="M0 0h48l-7 16H9z" fill="#fff"/><path d="M0 0l9 16.500h32L48 0" fill="none" stroke="#999"/></svg><span>模型</span></button>
          <button class="layout-tab"><svg width="66" height="17"><path d="M0 16.500h58L66 0" fill="none" stroke="#999"/></svg><span>LAYOUT1</span></button>
        </div>
        <div class="scroll-strip"></div>
        <div class="watermark">CSDN @biyezuopinvip</div>
      </footer>
    </main>
  </div>
</body>
</html>
```
FILE: styles.css
```
* { box-sizing: border-box; }

body {
  margin: 0;
  height: 100vh;
  display: flex;
  flex-direction: column;
  overflow: hidden;
  background: #e6e6e6;
  color: #444;
  font-family: Roboto, "Noto Sans CJK SC", sans-serif;
  font-size: 13px;
}

button {
  margin: 0;
  padding: 0;
  border: none;
  background: none;
  color: inherit;
  font: inherit;
  white-space: nowrap;
}

svg {
  display: block;
  flex: none;
}

.defs { position: absolute; }

.caret {
  width: 5px;
  height: 3px;
}

/* title bar */
.topbar {
  height: 5px;
  flex: none;
  padding-left: 55px;
  background: #2b579a;
}

.topbar-tab {
  display: block;
  width: 53px;
  height: 5px;
  background: #f0f0f0;
}

/* ribbon */
.ribbon {
  display: flex;
  flex: none;
  height: 99px;
  padding-top: 3px;
  background: #f1f1f1;
  border-bottom: 1px solid #d0d0d0;
  overflow: hidden;
}

.group {
  flex: none;
  height: 92px;
  border-right: 1px solid #d5d5d5;
}

.group h2 {
  margin: 0;
  font-size: 13px;
  font-weight: normal;
  line-height: 20px;
  text-align: center;
  color: #666;
}

.tools {
  display: flex;
  height: 72px;
}

.draw { width: 332px; padding-left: 3px; }
.modify { width: 150px; padding-left: 4px; }
.annotate { width: 156px; padding-left: 6px; }
.properties { width: 380px; }
.clipboard { width: 132px; padding-left: 6px; }

.draw h2, .modify h2, .annotate h2 { padding-right: 6px; }

.big {
  display: flex;
  flex-direction: column;
  align-items: center;
  width: 42px;
  padding-top: 4px;
  line-height: 18px;
}

.big.wide { width: 68px; }
.big .caret { margin-top: 4px; }

.symbol-icon {
  display: flex;
  align-items: center;
  width: 28px;
  height: 22px;
  margin: 6px 0;
  border: 1px solid #222;
  background: #fff;
}

.symbol-icon b {
  flex: 1;
  border-left: 1px solid #222;
  line-height: 20px;
  color: #111;
}

.small-grid {
  display: grid;
  grid-template-rows: repeat(3, 22px);
  padding-top: 2px;
}

.draw-grid { grid-template-columns: 24px 10px repeat(3, 26px); }
.modify-grid { grid-template-columns: repeat(5, 26px) 10px; }

.small-grid button,
.prop-grid button {
  display: flex;
  align-items: center;
  justify-content: center;
}

.word-list {
  display: flex;
  flex-direction: column;
  padding-top: 1px;
}

.word-list button {
  display: flex;
  align-items: center;
  gap: 2px;
  height: 22px;
  padding-left: 2px;
}

.word-list .caret { margin-left: 3px; }

.prop-grid {
  display: grid;
  grid-template-columns: 20px 14px 124px 24px 124px;
  grid-template-rows: repeat(2, 30px);
  align-items: center;
  padding-top: 6px;
}

.mid { justify-self: center; }

.combo {
  display: flex;
  align-items: center;
  height: 21px;
  padding: 0 4px 0 2px;
  border: 1px solid #c6c6c6;
  background: #fff;
  color: #000;
}

.combo select {
  flex: 1;
  min-width: 0;
  height: 19px;
  padding: 0;
  border: none;
  background: none;
  appearance: none;
  color: inherit;
  font-family: Roboto, "Noto Sans CJK SC", sans-serif;
  font-size: 12px;
  overflow: hidden;
}

.combo .caret { margin-left: 5px; }
.combo.layer .caret { margin-left: 9px; }

.swatch {
  flex: none;
  width: 14px;
  height: 14px;
  margin: 0 3px 0 1px;
  border: 1px solid #111;
}

.color .swatch {
  width: 12px;
  height: 12px;
  margin: 0 6px 0 5px;
  border-color: #0078d7;
}

.rule {
  flex: none;
  width: 59px;
  height: 1px;
  margin: 0 4px 0 2px;
  background: #000;
}

.linetype { padding-left: 1px; }

.rule.red {
  width: 70px;
  margin-left: 0;
  background: #f00;
}

/* workspace */
.workspace {
  display: flex;
  flex: 1;
  min-height: 0;
}

.palette {
  flex: none;
  width: 25px;
  padding: 7px 0 0 5px;
}

main {
  display: flex;
  flex: 1;
  flex-direction: column;
  min-width: 0;
}

.file-tabs {
  display: flex;
  align-items: flex-end;
  flex: none;
  height: 22px;
}

.file-tab {
  display: flex;
  align-items: center;
  height: 20px;
  line-height: 18px;
}

.file-tab span {
  height: 20px;
  border-top: 1px solid #aaa;
  background: #f0f0f0;
}

.first span { padding: 0 19px 0 21px; }

.second span {
  padding: 0 2px 0 20px;
  border-left: 1px solid #aaa;
}

.current {
  background: #fff;
  border-right: 1px solid #aaa;
  border-radius: 0 3px 0 0;
  padding-right: 6px;
  font-weight: bold;
}

.current span {
  padding: 0 14px;
  background: #fff;
}

.canvas {
  flex: 1;
  min-height: 0;
  background: #000;
  overflow: hidden;
}

.drawing {
  width: 100%;
  height: 100%;
}

.sheet-no {
  fill: #fff;
  font-family: "Liberation Sans Narrow", Lato, sans-serif;
  font-size: 18px;
  font-weight: 300;
}

/* layout bar */
.layout-bar {
  position: relative;
  flex: none;
  padding-bottom: 2px;
}

.layout-tabs {
  display: flex;
  height: 17px;
}

.steps {
  display: flex;
  align-items: center;
  gap: 8px;
  width: 65px;
  padding-left: 2px;
}

.layout-tab {
  display: grid;
  place-items: center;
  height: 17px;
  font-size: 12px;
  line-height: 16px;
}

.layout-tab svg,
.layout-tab span { grid-area: 1 / 1; }

.layout-tab + .layout-tab { padding-right: 2px; }

.layout-tab.active {
  font-size: 14px;
  font-weight: bold;
}

.scroll-strip {
  height: 6px;
  background: #cdcdcd;
}

.watermark {
  position: absolute;
  right: 14px;
  bottom: 9px;
  color: #d0d0d0;
  font-family: "Liberation Sans", sans-serif;
  font-size: 18px;
  line-height: 22px;
  text-shadow: 1px 1px 1px #888;
}
```
